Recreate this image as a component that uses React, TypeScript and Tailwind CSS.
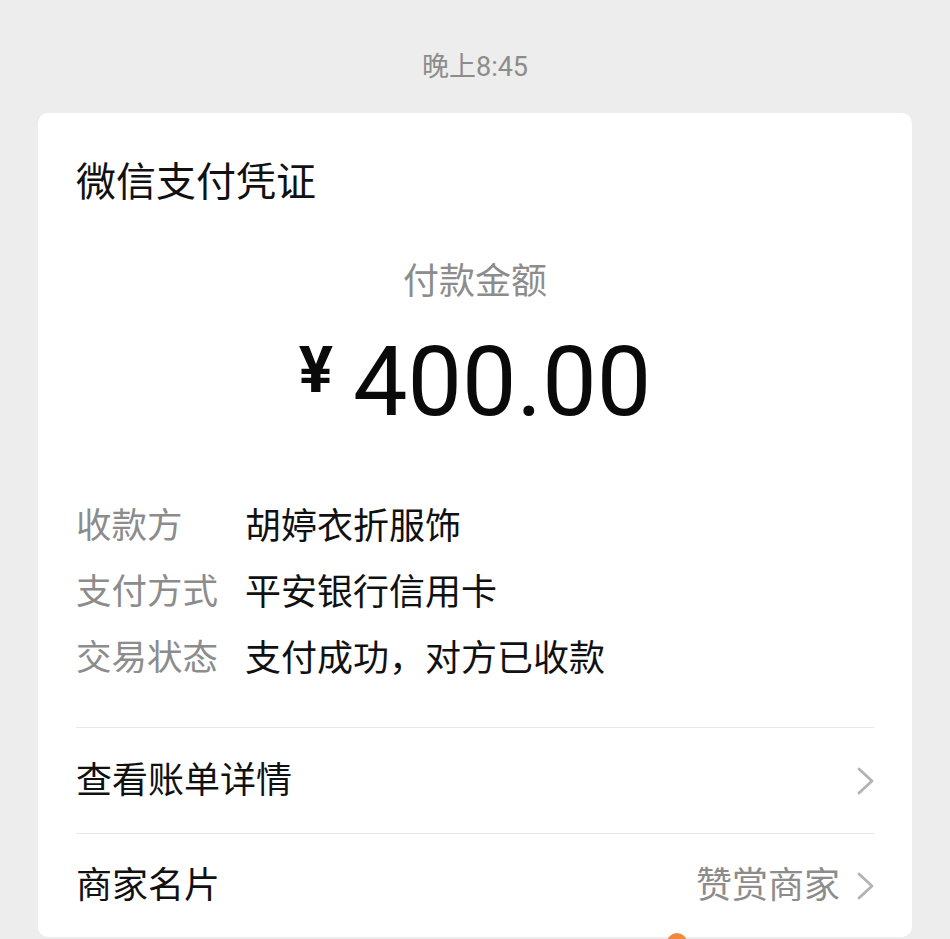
import React from "react";

const FONT = { fontFamily: '"Roboto", "Noto Sans CJK SC", "Noto Sans", sans-serif' };

function Chevron() {
  return (
    <svg width="18" height="28" viewBox="0 0 18 28" className="shrink-0">
      <polyline points="3,2 16,14 3,26" fill="none" stroke="#b3b3b3" strokeWidth="2.8" strokeLinecap="round" strokeLinejoin="round" />
    </svg>
  );
}

export default function App() {
  return (
    <div className="relative w-[950px] h-[939px] overflow-hidden bg-[#ededed]" style={FONT}>
      <div className="pt-[50px] text-center text-[27px] leading-[34px] text-[#8c8c8c]">晚上8:45</div>
      <div className="mx-[38px] mt-[29px] rounded-[10px] bg-white px-[38px]">
        <div className="pt-[46px] text-[40px] leading-[48px] text-[#111]">微信支付凭证</div>
        <div className="mt-[53px] text-center text-[36px] leading-[44px] text-[#8c8c8c]">付款金额</div>
        <div className="mt-[28px] flex items-start justify-center h-[100px] text-[#0a0a0a]">
          <span className="mt-[7px] mr-[20px] text-[64px] leading-[64px] font-bold">¥</span>
          <span className="text-[97px] leading-[100px] font-normal">400.00</span>
        </div>
        <div className="mt-[62px] flex flex-col">
          <div className="flex h-[66px] items-center">
            <span className="w-[169px] text-[35.5px] text-[#8c8c8c]">收款方</span>
            <span className="text-[36px] text-[#111]">胡婷衣折服饰</span>
          </div>
          <div className="flex h-[66px] items-center">
            <span className="w-[169px] text-[35.5px] text-[#8c8c8c]">支付方式</span>
            <span className="text-[36px] text-[#111]">平安银行信用卡</span>
          </div>
          <div className="flex h-[66px] items-center">
            <span className="w-[169px] text-[35.5px] text-[#8c8c8c]">交易状态</span>
            <span className="text-[36px] text-[#111]">支付成功，对方已收款</span>
          </div>
        </div>
        <div className="mt-[35px] h-px bg-[#e8e8e8]" />
        <div className="flex h-[105px] items-center justify-between">
          <span className="text-[36px] text-[#111]">查看账单详情</span>
          <Chevron />
        </div>
        <div className="h-px bg-[#e8e8e8]" />
        <div className="flex h-[103px] items-center justify-between">
          <span className="text-[36px] text-[#111]">商家名片</span>
          <div className="flex items-center gap-[16px]">
            <span className="text-[36px] text-[#8c8c8c]">赞赏商家</span>
            <Chevron />
          </div>
        </div>
      </div>
      <div className="absolute left-[667px] top-[933px] h-[20px] w-[20px] rounded-full bg-[#f08a3a]" />
    </div>
  );
}
